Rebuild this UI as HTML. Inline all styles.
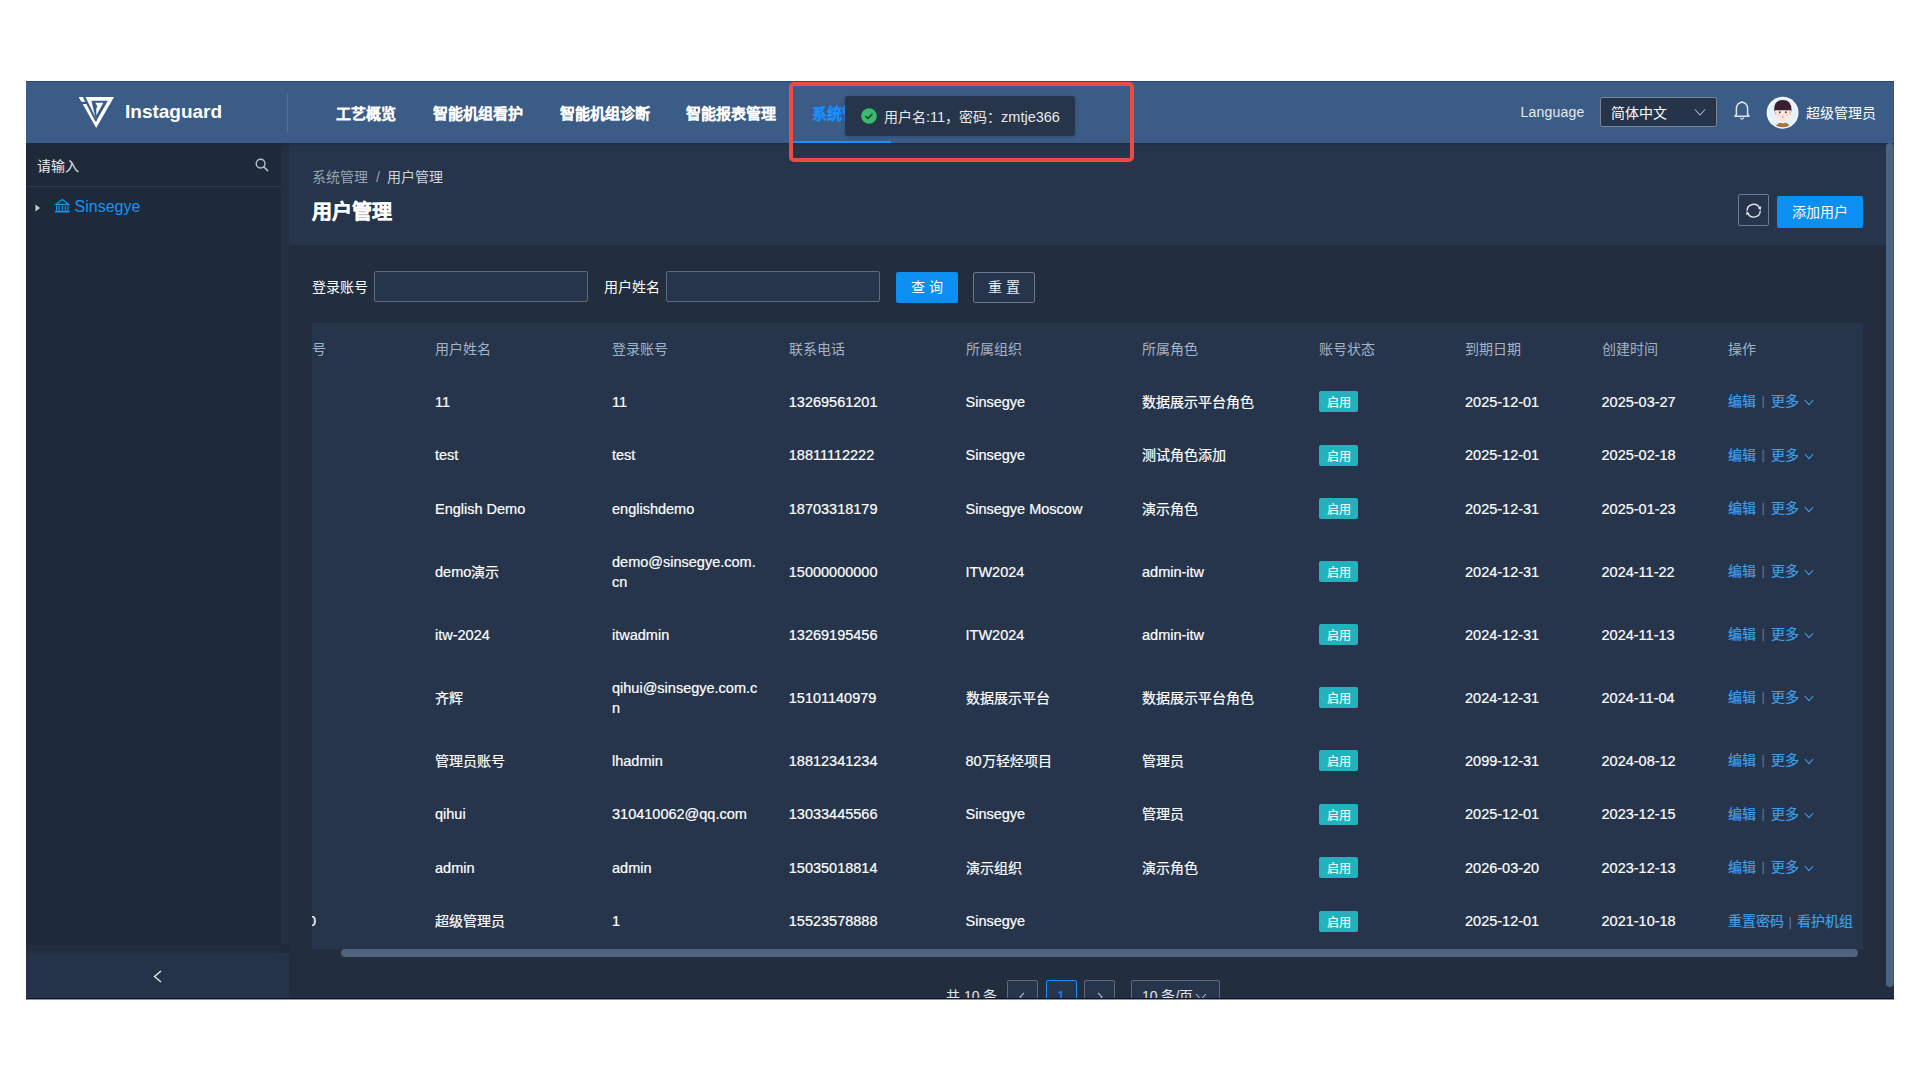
<!DOCTYPE html>
<html lang="zh-CN"><head><meta charset="utf-8">
<style>
*{box-sizing:border-box;margin:0;padding:0}
html,body{width:1920px;height:1080px;overflow:hidden;background:#fff;font-family:"Liberation Sans",sans-serif;color:#fff}
.a{position:absolute}
#app{position:absolute;left:26px;top:81px;width:1868px;height:918px;background:#222d3e;overflow:hidden;box-shadow:0 1px 0 rgba(0,20,48,0.45)}
#hdr{position:absolute;left:0;top:0;width:1868px;height:62px;background:#3b5c87;border-top:1px solid #24497a;border-right:1.5px solid #2b4f7e}
.nav{position:absolute;top:23px;-webkit-text-stroke:0.1px currentColor;font-size:15px;font-weight:bold;line-height:18px;white-space:nowrap;color:#fff}
#side{position:absolute;left:0;top:62px;width:255px;height:802px;background:#1e2939}
#sstrip{position:absolute;left:255px;top:62px;width:8px;height:809.5px;background:#1f2a3a}
#sthumb{position:absolute;left:255px;top:64px;width:8px;height:799.6px;background:#223041;border-radius:4px}
#hthumb{position:absolute;left:0;top:864px;width:255px;height:7.5px;background:#222f3f;border-radius:0 4px 4px 0}
#collapse{position:absolute;left:0;top:871.5px;width:263px;height:46.5px;background:#24334a}
#phead{position:absolute;left:263px;top:62px;width:1597px;height:102px;background:#26354b}
#vscroll{position:absolute;left:1860px;top:62px;width:8px;height:856px;background:#222d3e}
#vthumb{position:absolute;left:1860px;top:62px;width:7.5px;height:843.6px;background:#4d6480;border-right:1.5px solid #3d5873;border-radius:4px}
.inp{position:absolute;background:#26354b;border:1px solid #5d6b7f;border-radius:2px}
.btn{position:absolute;font-size:14px;text-align:center;border-radius:2px}
#table{position:absolute;left:286px;top:242px;width:1551px;height:634px;background:#26354b;overflow:hidden}
.th{position:absolute;top:16.5px;font-size:14px;line-height:18px;color:#a3b3c6;white-space:nowrap}
.row{position:absolute;left:0;width:1551px}
.cell{position:absolute;top:50%;transform:translateY(-50%);font-size:14.5px;line-height:20px;white-space:nowrap;color:#fff;-webkit-text-stroke:0.2px #fff}
.c{font-size:14px}
.tag{position:absolute;top:50%;margin-top:-10.5px;width:39px;height:21px;background:#21b2bd;border-radius:2px;font-size:12px;line-height:24px;text-align:center;color:#fff;-webkit-text-stroke:0.15px #fff}
.op{position:absolute;top:50%;margin-top:-10.5px;font-size:14px;line-height:20px;white-space:nowrap;color:#3e9fe9;-webkit-text-stroke:0.2px #3e9fe9}
.sep{color:#566880;padding:0 5px;font-size:13px}
.sepx{color:#596c84;font-size:13px;-webkit-text-stroke:0.3px #596c84}
.chev{position:absolute;left:1492px;top:50%;margin-top:-2.5px}
</style></head>
<body>
<div id="app">
  <div id="hdr">
    <!-- logo -->
    <svg class="a" style="left:48px;top:10px" width="44" height="40" viewBox="0 0 44 40">
      <polygon points="4.7,5.1 40,5.1 22.2,36.1" fill="#fff"/>
      <polygon points="8.6,4.5 11.2,4.5 22.9,28.2 22.2,29.6 21.2,29.2" fill="#3b5c87"/>
      <polygon points="4,9.8 12.8,9.8 13.9,12 5.3,12" fill="#3b5c87"/>
      <polygon points="17.4,8.7 33.9,8.7 22.2,28.9" fill="#3b5c87"/>
      <polygon points="21.3,10.8 29.3,10.8 22.3,23.6 22.3,16.4 23.4,14.5" fill="#fff"/>
    </svg>
    <div class="a" style="left:99px;top:19px;font-size:19px;font-weight:bold;line-height:22px">Instaguard</div>
    <div class="a" style="left:261px;top:11px;width:1px;height:39px;background:#52719a"></div>
    <div class="nav" style="left:310px">工艺概览</div>
    <div class="nav" style="left:407px">智能机组看护</div>
    <div class="nav" style="left:534px">智能机组诊断</div>
    <div class="nav" style="left:660px">智能报表管理</div>
    <div class="nav" style="left:786px;color:#1890ff">系统管理</div>
    <div class="a" style="left:767px;top:59px;width:98px;height:3px;background:#1890ff"></div>
    <div class="a" style="left:1494.5px;top:20.5px;font-size:14px;line-height:18px;color:#e6ebf1;letter-spacing:0.2px">Language</div>
    <div class="a" style="left:1574px;top:14.5px;width:117px;height:30.5px;background:#26344b;border:1px solid #7a8698;border-radius:2px"></div>
    <div class="a" style="left:1585px;top:22px;font-size:14px;line-height:18px;color:#fff">简体中文</div>

    <svg class="a" style="left:1668px;top:26px" width="12" height="9" viewBox="0 0 12 9"><polyline points="1,1.5 6,7 11,1.5" fill="none" stroke="#aab4c0" stroke-width="1.1"/></svg>
    <svg class="a" style="left:1707px;top:17px" width="18" height="22" viewBox="0 0 18 22"><path d="M3.4,16.6 V9.6 A5.6,6.4 0 0 1 14.6,9.6 V16.6" fill="none" stroke="#dde3ea" stroke-width="1.5"/><path d="M1.6,17.2 Q3.4,16.4 3.4,15 M16.4,17.2 Q14.6,16.4 14.6,15 M1.4,17.3 H16.6" fill="none" stroke="#dde3ea" stroke-width="1.5"/><path d="M9,2.2 V3.4" stroke="#dde3ea" stroke-width="1.8"/><path d="M7.5,18.6 A1.5,1.5 0 0 0 10.5,18.6" fill="none" stroke="#dde3ea" stroke-width="1.3"/></svg>
    <svg class="a" style="left:1740px;top:14px" width="34" height="34" viewBox="0 0 34 34">
      <defs><clipPath id="avc"><circle cx="16.6" cy="16.75" r="14.5"/></clipPath></defs>
      <circle cx="16.6" cy="16.75" r="15.9" fill="#f7fbff"/>
      <circle cx="16.6" cy="16.75" r="14.5" fill="#e6f2fb"/>
      <g clip-path="url(#avc)">
        <path d="M8.6,34 Q9.4,26.6 16.8,26.2 Q24.2,26.6 25,34 Z" fill="#a9743f"/>
        <rect x="15" y="21" width="3.6" height="5.2" fill="#fcdccc"/>
        <path d="M13.6,25.8 L16.8,27.6 L20,25.8 L18.6,25.2 L16.8,26.2 L15,25.2 Z" fill="#fff"/>
        <ellipse cx="9.9" cy="17" rx="1.3" ry="1.8" fill="#f4b393"/>
        <ellipse cx="23.7" cy="17" rx="1.3" ry="1.8" fill="#f4b393"/>
        <path d="M10.2,13 V19 Q10.4,24.6 16.8,24.7 Q23.2,24.6 23.4,19 V13 Z" fill="#fde9de"/>
        <path d="M8.2,15.5 Q7.4,3.9 16.8,3.9 Q26.2,3.9 25.4,15.5 L24.3,14.2 L16.8,14.3 L9.3,14.2 Z" fill="#3a1e34"/>
        <ellipse cx="13.7" cy="16.2" rx="0.9" ry="1" fill="#333"/>
        <ellipse cx="19.9" cy="16.2" rx="0.9" ry="1" fill="#333"/>
        <circle cx="12.3" cy="18.8" r="1.1" fill="#f9c9c9"/>
        <circle cx="21.3" cy="18.8" r="1.1" fill="#f9c9c9"/>
        <ellipse cx="16.8" cy="21" rx="1" ry="0.7" fill="#ef8585"/>
      </g>
    </svg>
    <div class="a" style="left:1779.5px;top:22px;font-size:14px;line-height:18px;color:#fff">超级管理员</div>
  </div>
  <div id="side"></div>
  <div id="sstrip"></div><div id="sthumb"></div><div id="hthumb"></div>
  <div id="collapse"></div>
  <div id="phead"></div><div class="a" style="left:263px;top:62px;width:1597px;height:3px;background:linear-gradient(#1f2b3d,rgba(38,53,75,0))"></div>
  <div id="vscroll"></div><div id="vthumb"></div>
  <div id="table">
<div class="th" style="left:-14px">序号</div>
<div class="th" style="left:123px">用户姓名</div>
<div class="th" style="left:300px">登录账号</div>
<div class="th" style="left:476.75px">联系电话</div>
<div class="th" style="left:653.5px">所属组织</div>
<div class="th" style="left:830px">所属角色</div>
<div class="th" style="left:1007px">账号状态</div>
<div class="th" style="left:1153px">到期日期</div>
<div class="th" style="left:1289.5px">创建时间</div>
<div class="th" style="left:1415.5px">操作</div>
<div class="row" style="top:52px;height:53.5px"><div class="cell" style="left:123px">11</div><div class="cell" style="left:300px">11</div><div class="cell" style="left:476.75px">13269561201</div><div class="cell" style="left:653.5px">Sinsegye</div><div class="cell" style="left:830px"><span class="c">数据展示平台角色</span></div><div class="tag" style="left:1007px">启用</div><div class="cell" style="left:1153px">2025-12-01</div><div class="cell" style="left:1289.5px">2025-03-27</div><div class="op" style="left:1415.5px">编辑</div><div class="op sepx" style="left:1449.5px">|</div><div class="op" style="left:1459px">更多</div><svg class="chev" width="10" height="7" viewBox="0 0 10 7"><polyline points="0.8,1 5,5.6 9.2,1" fill="none" stroke="#3e9fe9" stroke-width="1.1"/></svg></div>
<div class="row" style="top:105.5px;height:53.5px"><div class="cell" style="left:123px">test</div><div class="cell" style="left:300px">test</div><div class="cell" style="left:476.75px">18811112222</div><div class="cell" style="left:653.5px">Sinsegye</div><div class="cell" style="left:830px"><span class="c">测试角色添加</span></div><div class="tag" style="left:1007px">启用</div><div class="cell" style="left:1153px">2025-12-01</div><div class="cell" style="left:1289.5px">2025-02-18</div><div class="op" style="left:1415.5px">编辑</div><div class="op sepx" style="left:1449.5px">|</div><div class="op" style="left:1459px">更多</div><svg class="chev" width="10" height="7" viewBox="0 0 10 7"><polyline points="0.8,1 5,5.6 9.2,1" fill="none" stroke="#3e9fe9" stroke-width="1.1"/></svg></div>
<div class="row" style="top:159.0px;height:53.5px"><div class="cell" style="left:123px">English Demo</div><div class="cell" style="left:300px">englishdemo</div><div class="cell" style="left:476.75px">18703318179</div><div class="cell" style="left:653.5px">Sinsegye Moscow</div><div class="cell" style="left:830px"><span class="c">演示角色</span></div><div class="tag" style="left:1007px">启用</div><div class="cell" style="left:1153px">2025-12-31</div><div class="cell" style="left:1289.5px">2025-01-23</div><div class="op" style="left:1415.5px">编辑</div><div class="op sepx" style="left:1449.5px">|</div><div class="op" style="left:1459px">更多</div><svg class="chev" width="10" height="7" viewBox="0 0 10 7"><polyline points="0.8,1 5,5.6 9.2,1" fill="none" stroke="#3e9fe9" stroke-width="1.1"/></svg></div>
<div class="row" style="top:212.5px;height:72.5px"><div class="cell" style="left:123px">demo<span class="c">演示</span></div><div class="cell" style="left:300px">demo@sinsegye.com.<br>cn</div><div class="cell" style="left:476.75px">15000000000</div><div class="cell" style="left:653.5px">ITW2024</div><div class="cell" style="left:830px">admin-itw</div><div class="tag" style="left:1007px">启用</div><div class="cell" style="left:1153px">2024-12-31</div><div class="cell" style="left:1289.5px">2024-11-22</div><div class="op" style="left:1415.5px">编辑</div><div class="op sepx" style="left:1449.5px">|</div><div class="op" style="left:1459px">更多</div><svg class="chev" width="10" height="7" viewBox="0 0 10 7"><polyline points="0.8,1 5,5.6 9.2,1" fill="none" stroke="#3e9fe9" stroke-width="1.1"/></svg></div>
<div class="row" style="top:285.0px;height:53.5px"><div class="cell" style="left:123px">itw-2024</div><div class="cell" style="left:300px">itwadmin</div><div class="cell" style="left:476.75px">13269195456</div><div class="cell" style="left:653.5px">ITW2024</div><div class="cell" style="left:830px">admin-itw</div><div class="tag" style="left:1007px">启用</div><div class="cell" style="left:1153px">2024-12-31</div><div class="cell" style="left:1289.5px">2024-11-13</div><div class="op" style="left:1415.5px">编辑</div><div class="op sepx" style="left:1449.5px">|</div><div class="op" style="left:1459px">更多</div><svg class="chev" width="10" height="7" viewBox="0 0 10 7"><polyline points="0.8,1 5,5.6 9.2,1" fill="none" stroke="#3e9fe9" stroke-width="1.1"/></svg></div>
<div class="row" style="top:338.5px;height:72.5px"><div class="cell" style="left:123px"><span class="c">齐辉</span></div><div class="cell" style="left:300px">qihui@sinsegye.com.c<br>n</div><div class="cell" style="left:476.75px">15101140979</div><div class="cell" style="left:653.5px"><span class="c">数据展示平台</span></div><div class="cell" style="left:830px"><span class="c">数据展示平台角色</span></div><div class="tag" style="left:1007px">启用</div><div class="cell" style="left:1153px">2024-12-31</div><div class="cell" style="left:1289.5px">2024-11-04</div><div class="op" style="left:1415.5px">编辑</div><div class="op sepx" style="left:1449.5px">|</div><div class="op" style="left:1459px">更多</div><svg class="chev" width="10" height="7" viewBox="0 0 10 7"><polyline points="0.8,1 5,5.6 9.2,1" fill="none" stroke="#3e9fe9" stroke-width="1.1"/></svg></div>
<div class="row" style="top:411.0px;height:53.5px"><div class="cell" style="left:123px"><span class="c">管理员账号</span></div><div class="cell" style="left:300px">lhadmin</div><div class="cell" style="left:476.75px">18812341234</div><div class="cell" style="left:653.5px">80<span class="c">万轻烃项目</span></div><div class="cell" style="left:830px"><span class="c">管理员</span></div><div class="tag" style="left:1007px">启用</div><div class="cell" style="left:1153px">2099-12-31</div><div class="cell" style="left:1289.5px">2024-08-12</div><div class="op" style="left:1415.5px">编辑</div><div class="op sepx" style="left:1449.5px">|</div><div class="op" style="left:1459px">更多</div><svg class="chev" width="10" height="7" viewBox="0 0 10 7"><polyline points="0.8,1 5,5.6 9.2,1" fill="none" stroke="#3e9fe9" stroke-width="1.1"/></svg></div>
<div class="row" style="top:464.5px;height:53.5px"><div class="cell" style="left:123px">qihui</div><div class="cell" style="left:300px">310410062@qq.com</div><div class="cell" style="left:476.75px">13033445566</div><div class="cell" style="left:653.5px">Sinsegye</div><div class="cell" style="left:830px"><span class="c">管理员</span></div><div class="tag" style="left:1007px">启用</div><div class="cell" style="left:1153px">2025-12-01</div><div class="cell" style="left:1289.5px">2023-12-15</div><div class="op" style="left:1415.5px">编辑</div><div class="op sepx" style="left:1449.5px">|</div><div class="op" style="left:1459px">更多</div><svg class="chev" width="10" height="7" viewBox="0 0 10 7"><polyline points="0.8,1 5,5.6 9.2,1" fill="none" stroke="#3e9fe9" stroke-width="1.1"/></svg></div>
<div class="row" style="top:518.0px;height:53.5px"><div class="cell" style="left:123px">admin</div><div class="cell" style="left:300px">admin</div><div class="cell" style="left:476.75px">15035018814</div><div class="cell" style="left:653.5px"><span class="c">演示组织</span></div><div class="cell" style="left:830px"><span class="c">演示角色</span></div><div class="tag" style="left:1007px">启用</div><div class="cell" style="left:1153px">2026-03-20</div><div class="cell" style="left:1289.5px">2023-12-13</div><div class="op" style="left:1415.5px">编辑</div><div class="op sepx" style="left:1449.5px">|</div><div class="op" style="left:1459px">更多</div><svg class="chev" width="10" height="7" viewBox="0 0 10 7"><polyline points="0.8,1 5,5.6 9.2,1" fill="none" stroke="#3e9fe9" stroke-width="1.1"/></svg></div>
<div class="row" style="top:571.5px;height:53.5px"><div class="cell" style="left:123px"><span class="c">超级管理员</span></div><div class="cell" style="left:300px">1</div><div class="cell" style="left:476.75px">15523578888</div><div class="cell" style="left:653.5px">Sinsegye</div><div class="tag" style="left:1007px">启用</div><div class="cell" style="left:1153px">2025-12-01</div><div class="cell" style="left:1289.5px">2021-10-18</div><div class="op" style="left:1415.5px">重置密码<span class="sep">|</span>看护机组</div></div>
<div class="cell" style="left:-12px;top:598.25px">10</div>
<div class="a" style="left:0;top:626px;width:1551px;height:8px;background:#222d3e"></div>
<div class="a" style="left:28.5px;top:626px;width:1517px;height:8px;background:#4d637e;border-radius:4px"></div>
</div>

  <!-- sidebar -->
  <div class="a" style="left:11px;top:76px;font-size:14px;line-height:18px;color:#e8ecf0">请输入</div>
  <svg class="a" style="left:229px;top:77px" width="14" height="14" viewBox="0 0 14 14"><circle cx="5.6" cy="5.6" r="4.4" fill="none" stroke="#b9c0c9" stroke-width="1.4"/><line x1="8.8" y1="8.8" x2="12.6" y2="12.6" stroke="#b9c0c9" stroke-width="1.5" stroke-linecap="round"/></svg>
  <div class="a" style="left:0;top:105px;width:255px;height:1px;background:#2f3b4c"></div>
  <svg class="a" style="left:9px;top:123px" width="6" height="8" viewBox="0 0 6 8"><polygon points="0.5,0.5 5,4 0.5,7.5" fill="#c9d0d8"/></svg>
  <svg class="a" style="left:28px;top:117px" width="16" height="16" viewBox="0 0 16 16" fill="none" stroke="#1197f5"><path d="M1.8,6.4 L8.3,1.6 L14.8,6.4 Z" stroke-width="1.3" stroke-linejoin="miter"/><path d="M2.6,7.6 V12.4 M5.2,7.6 V12.4 M8.3,7.6 V12.4 M11.4,7.6 V12.4 M14,7.6 V12.4" stroke-width="1.2"/><path d="M1,13.6 H15.6" stroke-width="1.8"/></svg>
  <div class="a" style="left:48.5px;top:115.5px;font-size:16px;line-height:20px;color:#1396f6">Sinsegye</div>
  <svg class="a" style="left:127px;top:889px" width="9" height="13" viewBox="0 0 9 13"><polyline points="8,1 1.5,6.5 8,12" fill="none" stroke="#e6eaee" stroke-width="1.4"/></svg>
  <!-- page header -->
  <div class="a" style="left:286px;top:86.5px;font-size:14px;line-height:18px;color:#9aa4b1;white-space:nowrap">系统管理<span style="padding:0 7px 0 8px">/</span><span style="color:#cfd5dc">用户管理</span></div>
  <div class="a" style="left:286px;top:119.5px;font-size:20px;font-weight:bold;line-height:22px;color:#fff;-webkit-text-stroke:0.4px #fff">用户管理</div>
  <div class="a" style="left:1712px;top:113px;width:31px;height:32px;border:1px solid #6f7a8a;border-radius:2px"></div>
  <svg class="a" style="left:1718px;top:121px" width="19" height="19" viewBox="0 0 19 19"><path d="M3.1,8.7 A6.6,6.6 0 0 1 15.6,6" fill="none" stroke="#e3e7ec" stroke-width="1.4"/><path d="M16.3,8.7 A6.6,6.6 0 0 1 3.8,11.4" fill="none" stroke="#e3e7ec" stroke-width="1.4"/><polygon points="13.9,5.9 17.3,4.3 16.7,8.2" fill="#e3e7ec"/><polygon points="5.5,11.5 2.1,13.1 2.7,9.2" fill="#e3e7ec"/></svg>
  <div class="btn" style="left:1751px;top:115px;width:86px;height:32px;background:#0b8ff0;line-height:32px;color:#fff">添加用户</div>
  <!-- filters -->
  <div class="a" style="left:286px;top:197px;font-size:14px;line-height:18px;color:#fff">登录账号</div>
  <div class="inp" style="left:348px;top:190px;width:214px;height:31px"></div>
  <div class="a" style="left:578px;top:197px;font-size:14px;line-height:18px;color:#fff">用户姓名</div>
  <div class="inp" style="left:640px;top:190px;width:214px;height:31px"></div>
  <div class="btn" style="left:870px;top:191px;width:62px;height:31px;background:#0b8ff0;line-height:31px;color:#fff;letter-spacing:4px;text-indent:4px">查询</div>
  <div class="btn" style="left:947px;top:191px;width:62px;height:31px;border:1px solid #6c7787;background:#26354b;line-height:29px;color:#e8ecf0;letter-spacing:4px;text-indent:4px">重置</div>

  <!-- pagination -->
  <div class="a" style="left:920px;top:906px;font-size:14px;line-height:18px;color:#e3e7ec;white-space:nowrap">共 10 条</div>
  <div class="a" style="left:981px;top:899px;width:31px;height:32px;border:1px solid #5f6b7c;border-radius:2px;background:#26354b"></div>
  <svg class="a" style="left:992px;top:911px" width="8" height="10" viewBox="0 0 8 10"><polyline points="6,1 2,5 6,9" fill="none" stroke="#aab2bd" stroke-width="1.1"/></svg>
  <div class="a" style="left:1019.5px;top:899px;width:31px;height:32px;border:1px solid #1890ff;border-radius:2px;background:#26354b;color:#1890ff;font-size:14px;text-align:center;line-height:30px">1</div>
  <div class="a" style="left:1058px;top:899px;width:31px;height:32px;border:1px solid #5f6b7c;border-radius:2px;background:#26354b"></div>
  <svg class="a" style="left:1070px;top:911px" width="8" height="10" viewBox="0 0 8 10"><polyline points="2,1 6,5 2,9" fill="none" stroke="#aab2bd" stroke-width="1.1"/></svg>
  <div class="a" style="left:1105px;top:899px;width:89px;height:32px;border:1px solid #5f6b7c;border-radius:2px;background:#26354b;color:#e3e7ec;font-size:14px;line-height:30px;padding-left:10px;white-space:nowrap">10 条/页</div>
  <svg class="a" style="left:1169px;top:912px" width="12" height="8" viewBox="0 0 12 8"><polyline points="1,1 6,6.5 11,1" fill="none" stroke="#aab2bd" stroke-width="1.1"/></svg>
  <!-- toast -->
  <div class="a" style="left:819px;top:15px;width:230px;height:40px;background:#27354a;border-radius:3px;box-shadow:0 1px 4px rgba(0,0,0,0.15)"></div>
  <svg class="a" style="left:834.5px;top:27px" width="16" height="16" viewBox="0 0 16 16"><circle cx="8" cy="8" r="7.8" fill="#3bbb6e"/><polyline points="4.6,8.2 7,10.5 11.4,5.8" fill="none" stroke="#1f3a2c" stroke-width="1.5"/></svg>
  <div class="a" style="left:858px;top:25.5px;font-size:14.5px;line-height:20px;color:#e6eaee;white-space:nowrap"><span class="c">用户名</span>:11<span class="c">，密码：</span>zmtje366</div>
  <div class="a" style="left:0;top:917px;width:1868px;height:1px;background:#031632"></div>
  <!-- red annotation box -->
  <div class="a" style="left:763px;top:1px;width:345px;height:80px;border:4px solid #ef4a43;border-radius:5px"></div>
</div>
</body></html>
